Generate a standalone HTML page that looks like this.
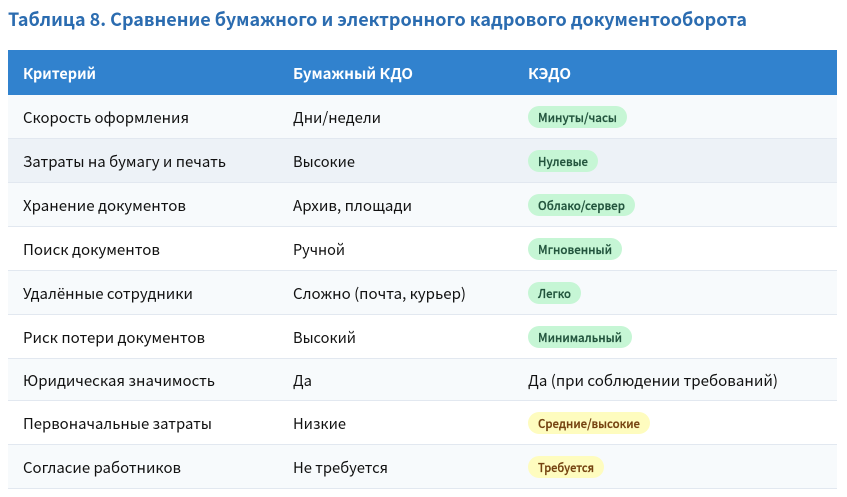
<!DOCTYPE html>
<html lang="ru"><head><meta charset="utf-8"><title>Таблица 8</title>
<style>
html,body{margin:0;padding:0;background:#fff;width:847px;height:497px;overflow:hidden}
svg{display:block;font-family:"Noto Sans CJK SC","Liberation Sans",sans-serif}
.h{font-size:15px;font-weight:700;fill:#fff}
.c{font-size:15px;fill:#111}
.b{font-size:12px;font-weight:500;stroke-width:.25px}
.g{fill:#22543d;stroke:#22543d}.y{fill:#744210;stroke:#744210}
</style></head><body>
<svg width="847" height="497" viewBox="0 0 847 497" xmlns="http://www.w3.org/2000/svg">
<text x="8" y="26" font-size="18" font-weight="700" fill="#2b6cb0" textLength="739" lengthAdjust="spacingAndGlyphs">Таблица 8. Сравнение бумажного и электронного кадрового документооборота</text>
<rect x="8" y="50" width="829" height="45" fill="#3182ce"/>
<rect x="8" y="95" width="829" height="43" fill="#f7fafc"/>
<rect x="8" y="139" width="829" height="43" fill="#edf2f7"/>
<rect x="8" y="183" width="829" height="43" fill="#f7fafc"/>
<rect x="8" y="271" width="829" height="43" fill="#f7fafc"/>
<rect x="8" y="359" width="829" height="41" fill="#f7fafc"/>
<rect x="8" y="445" width="829" height="43" fill="#f7fafc"/>
<g fill="#e2e8f0">
<rect x="8" y="138" width="829" height="1"/><rect x="8" y="182" width="829" height="1"/><rect x="8" y="226" width="829" height="1"/><rect x="8" y="270" width="829" height="1"/><rect x="8" y="314" width="829" height="1"/><rect x="8" y="358" width="829" height="1"/><rect x="8" y="400" width="829" height="1"/><rect x="8" y="444" width="829" height="1"/><rect x="8" y="488" width="829" height="1"/>
</g>
<text class="h" x="23" y="79" textLength="73" lengthAdjust="spacingAndGlyphs">Критерий</text>
<text class="h" x="293" y="79" textLength="120" lengthAdjust="spacingAndGlyphs">Бумажный КДО</text>
<text class="h" x="528" y="79" textLength="43" lengthAdjust="spacingAndGlyphs">КЭДО</text>

<text class="c" x="23" y="123" textLength="166" lengthAdjust="spacingAndGlyphs">Скорость оформления</text>
<text class="c" x="23" y="167" textLength="203" lengthAdjust="spacingAndGlyphs">Затраты на бумагу и печать</text>
<text class="c" x="23" y="211" textLength="163" lengthAdjust="spacingAndGlyphs">Хранение документов</text>
<text class="c" x="23" y="255" textLength="137" lengthAdjust="spacingAndGlyphs">Поиск документов</text>
<text class="c" x="23" y="299" textLength="170" lengthAdjust="spacingAndGlyphs">Удалённые сотрудники</text>
<text class="c" x="23" y="343" textLength="182" lengthAdjust="spacingAndGlyphs">Риск потери документов</text>
<text class="c" x="23" y="386" textLength="192" lengthAdjust="spacingAndGlyphs">Юридическая значимость</text>
<text class="c" x="23" y="429" textLength="189" lengthAdjust="spacingAndGlyphs">Первоначальные затраты</text>
<text class="c" x="23" y="473" textLength="158" lengthAdjust="spacingAndGlyphs">Согласие работников</text>

<text class="c" x="293" y="123" textLength="88" lengthAdjust="spacingAndGlyphs">Дни/недели</text>
<text class="c" x="293" y="167" textLength="62" lengthAdjust="spacingAndGlyphs">Высокие</text>
<text class="c" x="293" y="211" textLength="119" lengthAdjust="spacingAndGlyphs">Архив, площади</text>
<text class="c" x="293" y="255" textLength="52" lengthAdjust="spacingAndGlyphs">Ручной</text>
<text class="c" x="293" y="299" textLength="173" lengthAdjust="spacingAndGlyphs">Сложно (почта, курьер)</text>
<text class="c" x="293" y="343" textLength="63" lengthAdjust="spacingAndGlyphs">Высокий</text>
<text class="c" x="293" y="386" textLength="19" lengthAdjust="spacingAndGlyphs">Да</text>
<text class="c" x="293" y="429" textLength="53" lengthAdjust="spacingAndGlyphs">Низкие</text>
<text class="c" x="293" y="473" textLength="95" lengthAdjust="spacingAndGlyphs">Не требуется</text>

<text class="c" x="528" y="386" textLength="250" lengthAdjust="spacingAndGlyphs">Да (при соблюдении требований)</text>

<g fill="#c6f6d5">
<rect x="528" y="106" width="99" height="22" rx="11"/>
<rect x="528" y="150" width="70" height="22" rx="11"/>
<rect x="528" y="194" width="107" height="22" rx="11"/>
<rect x="528" y="238" width="94" height="22" rx="11"/>
<rect x="528" y="282" width="53" height="22" rx="11"/>
<rect x="528" y="326" width="104" height="22" rx="11"/>
</g>
<g fill="#fefcbf">
<rect x="528" y="412" width="122" height="22" rx="11"/>
<rect x="528" y="456" width="76" height="22" rx="11"/>
</g>
<text class="b g" x="538" y="122" textLength="79" lengthAdjust="spacingAndGlyphs">Минуты/часы</text>
<text class="b g" x="538" y="166" textLength="50" lengthAdjust="spacingAndGlyphs">Нулевые</text>
<text class="b g" x="538" y="210" textLength="87" lengthAdjust="spacingAndGlyphs">Облако/сервер</text>
<text class="b g" x="538" y="254" textLength="74" lengthAdjust="spacingAndGlyphs">Мгновенный</text>
<text class="b g" x="538" y="298" textLength="33" lengthAdjust="spacingAndGlyphs">Легко</text>
<text class="b g" x="538" y="342" textLength="84" lengthAdjust="spacingAndGlyphs">Минимальный</text>
<text class="b y" x="538" y="428" textLength="102" lengthAdjust="spacingAndGlyphs">Средние/высокие</text>
<text class="b y" x="538" y="472" textLength="56" lengthAdjust="spacingAndGlyphs">Требуется</text>
</svg>
</body></html>
